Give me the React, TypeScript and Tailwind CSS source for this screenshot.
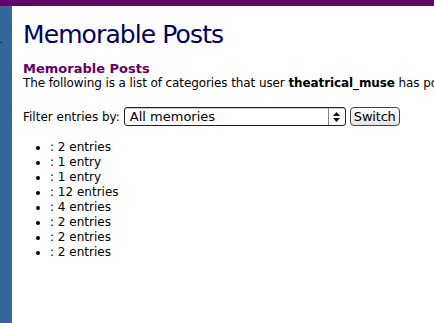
const counts = ['2 entries', '1 entry', '1 entry', '12 entries', '4 entries', '2 entries', '2 entries', '2 entries'];

export default function App() {
  return (
    <div className="flex h-[323px] w-[434px] flex-col overflow-hidden bg-white font-['DejaVu_Sans',Verdana,sans-serif] text-black">
      <div className="h-[6px] shrink-0 bg-[#660066]" />
      <div className="flex flex-1">
        <div className="relative w-[12px] shrink-0 bg-[#336699]">
          <div className="absolute left-0 top-[36px] h-px w-[2px] bg-[#0b2a4a]" />
        </div>
        <div className="min-w-0 flex-1 overflow-hidden pl-[11px]">
          <h1 className="mt-[13px] whitespace-nowrap text-[25px] leading-[32px] tracking-[-0.9px] text-[#000066]">Memorable Posts</h1>
          <h2 className="mt-[10px] whitespace-nowrap text-[13px] font-bold leading-[15px] text-[#660066]">Memorable Posts</h2>
          <p className="whitespace-nowrap text-[12px] leading-[15px] tracking-[-0.1px]">
            The following is a list of categories that user <b>theatrical_muse</b> has posted to:
          </p>
          <div className="mt-[16px] flex items-center gap-[4px] text-[12px]">
            <span className="whitespace-nowrap">Filter entries by:</span>
            <div className="flex h-[19px] w-[222px] items-stretch rounded-[3px] border border-[#222] bg-white shadow-[inset_0_1px_0_#ccc]">
              <span className="flex-1 pl-[5px] text-[13px] leading-[17px]">All memories</span>
              <span className="flex w-[17px] flex-col items-center justify-center gap-[2px] border-l border-[#888]">
                <svg width="7" height="4" viewBox="0 0 7 4"><path d="M0 4 L3.5 0 L7 4 Z" fill="#111" /></svg>
                <svg width="7" height="4" viewBox="0 0 7 4"><path d="M0 0 L3.5 4 L7 0 Z" fill="#111" /></svg>
              </span>
            </div>
            <button className="h-[19px] rounded-[4px] border border-[#444] bg-gradient-to-b from-white to-[#e4e4e4] px-[3px] text-[13px] leading-[16px] tracking-[-0.2px]">
              Switch
            </button>
          </div>
          <ul className="mt-[14px] list-disc pl-[27px] text-[12px] leading-[15px]">
            {counts.map((c, i) => (
              <li key={i}>: {c}</li>
            ))}
          </ul>
        </div>
      </div>
    </div>
  );
}
